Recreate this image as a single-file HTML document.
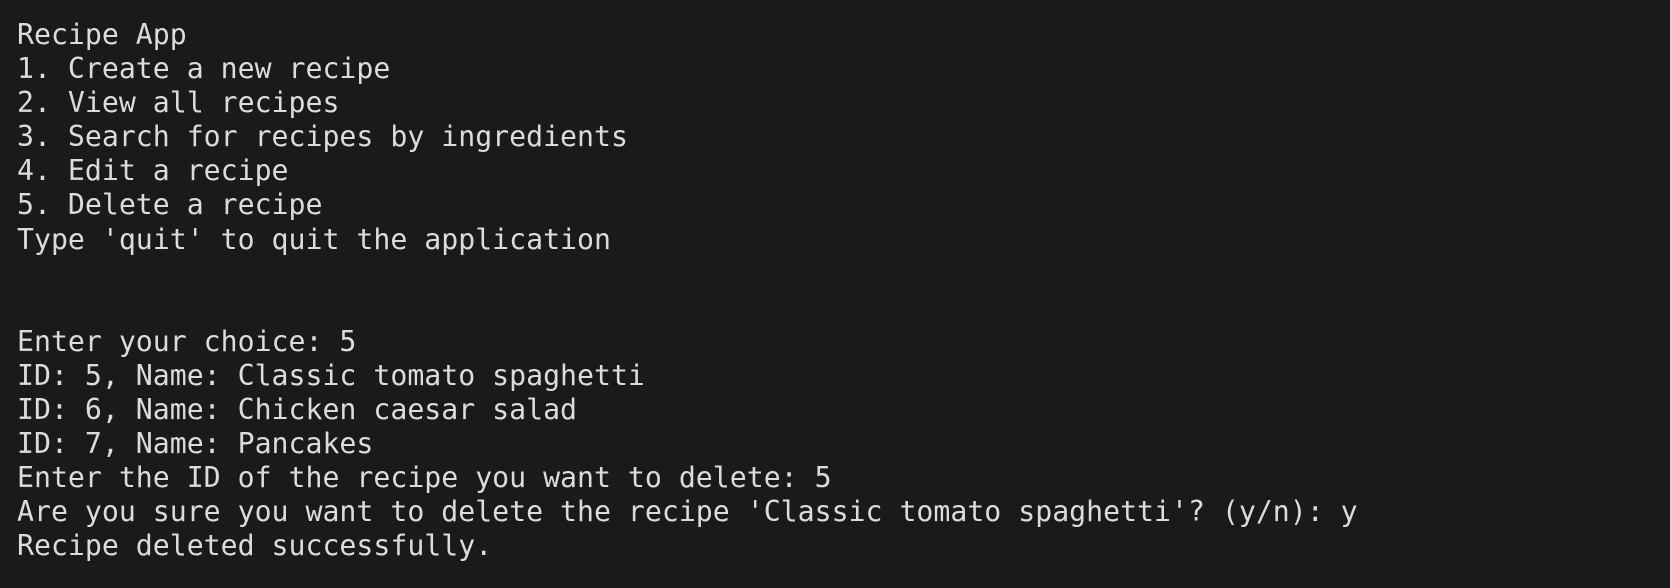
<!DOCTYPE html>
<html><head><meta charset="utf-8"><style>
html,body{margin:0;padding:0;background:#1a1a1a;width:1670px;height:588px;overflow:hidden}
pre{margin:0;padding:18px 0 0 17px;font-family:"DejaVu Sans Mono","Liberation Mono",monospace;font-size:28.2px;line-height:34.1px;color:#dcdcdc}
</style></head><body><pre>Recipe App
1. Create a new recipe
2. View all recipes
3. Search for recipes by ingredients
4. Edit a recipe
5. Delete a recipe
Type 'quit' to quit the application


Enter your choice: 5
ID: 5, Name: Classic tomato spaghetti
ID: 6, Name: Chicken caesar salad
ID: 7, Name: Pancakes
Enter the ID of the recipe you want to delete: 5
Are you sure you want to delete the recipe 'Classic tomato spaghetti'? (y/n): y
Recipe deleted successfully.</pre></body></html>
